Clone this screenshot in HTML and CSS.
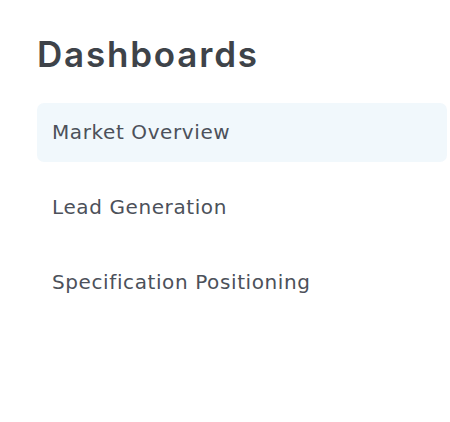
FILE: index.html
```html
<!DOCTYPE html>
<html lang="en">
<head>
<meta charset="utf-8">
<title>Dashboards</title>
<link rel="stylesheet" href="styles.css">
</head>
<body>
<aside class="sidebar">
  <h1 class="sidebar-title">Dashboards</h1>
  <nav class="nav-list">
    <a class="nav-item nav-item--active" href="#">Market Overview</a>
    <a class="nav-item" href="#">Lead Generation</a>
    <a class="nav-item" href="#">Specification Positioning</a>
  </nav>
</aside>
</body>
</html>
```
FILE: styles.css
```css
html, body {
  margin: 0;
  padding: 0;
  background: #ffffff;
}

body {
  font-family: "DejaVu Sans", "Noto Sans", sans-serif;
  color: #4a4f57;
}

.sidebar {
  width: 410px;
  padding: 30px 0 0 37px;
  display: flex;
  flex-direction: column;
}

.sidebar-title {
  margin: 0 0 25px 0;
  font-family: "Inter", "DejaVu Sans", sans-serif;
  font-size: 35px;
  line-height: 48px;
  font-weight: 600;
  color: #3e4349;
  letter-spacing: 1.8px;
}

.nav-list {
  display: flex;
  flex-direction: column;
  gap: 16px;
}

.nav-item {
  display: block;
  padding: 14px 15px;
  font-size: 20px;
  line-height: 31px;
  color: #4c515a;
  letter-spacing: 0.6px;
  text-decoration: none;
  border-radius: 7px;
}

.nav-item--active {
  background: #f1f8fc;
}
```
